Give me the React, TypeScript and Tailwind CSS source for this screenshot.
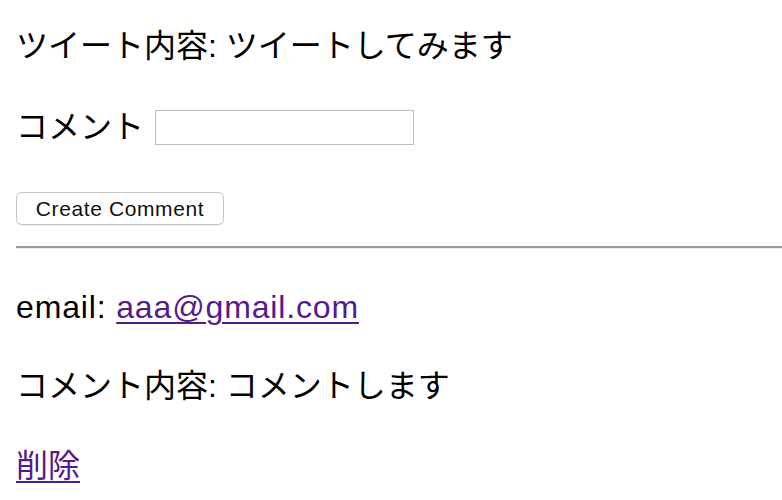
export default function App() {
  return (
    <div
      className="min-h-screen bg-white pl-4 text-black flex flex-col"
      style={{ fontFamily: '"Liberation Sans", "Noto Sans CJK JP", sans-serif' }}
    >
      <p className="mt-[22px] text-[32px] leading-[48px] whitespace-nowrap">ツイート内容: ツイートしてみます</p>

      <div className="mt-[33px] flex items-center h-[48px]">
        <label className="text-[32px] leading-[48px] whitespace-nowrap">コメント</label>
        <input
          type="text"
          className="ml-[11px] w-[259px] h-[35px] border border-[#bdbdbd] bg-white outline-none"
        />
      </div>

      <div className="mt-[41px]">
        <button className="h-[33px] w-[208px] rounded-[6px] border border-[#c6c6c6] bg-white text-[21px] tracking-[0.6px] text-[#111] shadow-[0_1px_1px_rgba(0,0,0,0.08)]">
          Create Comment
        </button>
      </div>

      <hr className="mt-[21px] border-0 border-t-2 border-b border-t-[#9a9a9a] border-b-[#ececec]" />

      <p className="mt-[34px] text-[32px] leading-[48px] whitespace-nowrap tracking-[0.85px]">
        email:{" "}
        <a href="#" className="text-[#551a8b] underline underline-offset-[4px] decoration-[2px]">
          aaa@gmail.com
        </a>
      </p>

      <p className="mt-[31px] text-[32px] leading-[48px] whitespace-nowrap">コメント内容: コメントします</p>

      <p className="mt-[32px] text-[32px] leading-[48px] whitespace-nowrap">
        <a href="#" className="text-[#551a8b] underline underline-offset-[4px] decoration-[2px]">
          削除
        </a>
      </p>
    </div>
  )
}
